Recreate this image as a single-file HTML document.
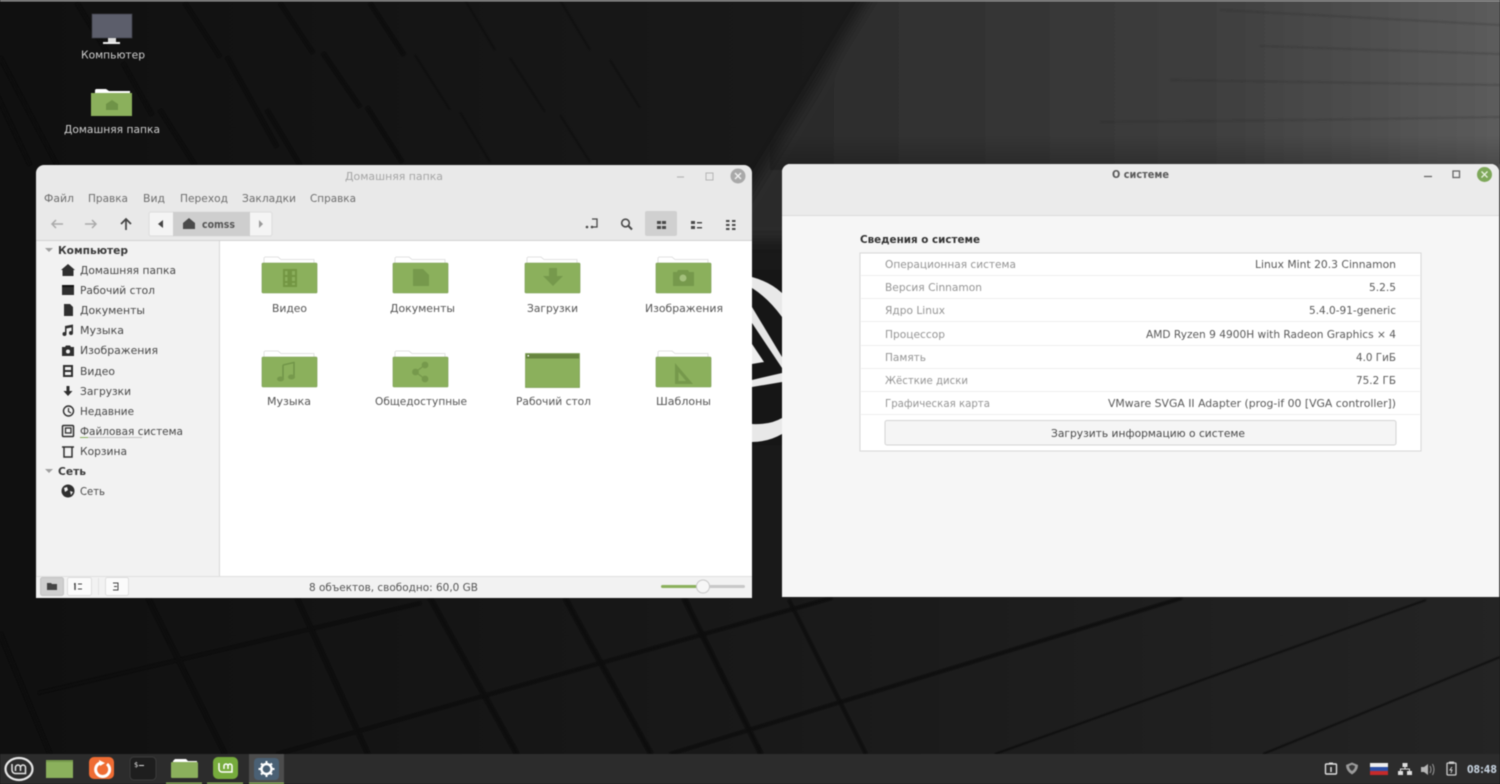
<!DOCTYPE html>
<html><head><meta charset="utf-8"><title>Linux Mint</title>
<style>
html,body{margin:0;padding:0;background:#111;width:1500px;height:784px;overflow:hidden}
svg{display:block;filter:blur(.45px)}
text{font-family:"DejaVu Sans","Liberation Sans",sans-serif;font-size:10.5px;fill:#555}
.b{font-weight:bold}
.m text{fill:#6d6d6d}
.s text{fill:#484848}
.f text{fill:#555}
.l text{fill:#959595}
.v text{fill:#5a5a5a}
.d text{fill:#cfcfcf}
.dl{stroke:#080808;fill:none}
</style></head><body>
<svg width="1500" height="784" viewBox="0 0 1500 784" xmlns="http://www.w3.org/2000/svg">
<defs>
<linearGradient id="bg" x1="0" x2="1" y1="0" y2="0"><stop offset="0" stop-color="#101010"/><stop offset=".5" stop-color="#191919"/><stop offset="1" stop-color="#242424"/></linearGradient>
<linearGradient id="tr" gradientUnits="userSpaceOnUse" x1="780" x2="1500" y1="0" y2="0"><stop offset="0" stop-color="#2a2a2a"/><stop offset=".6" stop-color="#3e3e3e"/><stop offset="1" stop-color="#5c5c5c"/></linearGradient>
<linearGradient id="v" gradientUnits="userSpaceOnUse" x1="0" x2="0" y1="135" y2="168"><stop offset="0" stop-color="#000" stop-opacity="0"/><stop offset="1" stop-color="#000" stop-opacity=".22"/></linearGradient>
<filter id="soft" x="-5%" y="-20%" width="110%" height="140%"><feGaussianBlur stdDeviation="7"/></filter>
<filter id="ln" x="-5%" y="-5%" width="110%" height="110%"><feGaussianBlur stdDeviation=".8"/></filter>
<g id="fold"><path d="M3 0h13l3 2.500h33v4H2V1z" fill="#fff" stroke="#d9d9d9" stroke-width=".8"/><rect x="0" y="6" width="55" height="30" rx="1" fill="#8bb05c" stroke="#76994c" stroke-width=".6"/></g>
</defs>
<!-- wallpaper -->
<rect width="1500" height="784" fill="url(#bg)"/>
<g filter="url(#soft)"><path d="M893 -40H1560V240H720z" fill="url(#tr)"/></g>
<path d="M770 135H1500V170H770z" fill="url(#v)"/>
<g filter="url(#ln)">
<g class="dl" stroke-width="4">
<path d="M77 3L110 57M185 3L220 57M280 3L313 53M227 57L277 147M323 53L360 107M370 3L404 55M367 107L402 162M267 110L300 165M123 63L152 115M0 57L57 165M-10 80L30 165M160 110L195 165"/>
</g>
<g class="dl" stroke-width="2" opacity=".3">
<path d="M465 0L495 50M560 0L590 50M415 55L450 110M510 58L545 112M610 60L640 108M460 112L490 162M560 115L590 162"/>
</g>
<g class="dl" stroke-width="4.500">
<path d="M148 598L225 754M297 598L368 754M430 598L517 754M565 598L651 754M684 598L761 754M0 633L50 754"/>
</g>
<g class="dl" stroke-width="3"><path d="M789 600L866 754M38 693L421 603M277 754L832 598M670 754L1182 598"/></g>
<g class="dl" stroke-width="1.500" opacity=".7"><path d="M995 754L1426 600M1263 754L1500 657"/></g>
<g stroke="#2c2c2c" stroke-width="1" fill="none" opacity=".45"><path d="M1220 10L1500 25M1260 46L1500 54M1170 80L1500 85M1100 122L1300 120L1500 117"/></g>
</g>
<rect width="1500" height="1.500" fill="#9a9a9a"/>
<!-- mint logo fragment -->
<rect x="752" y="270" width="30" height="175" fill="#161616"/>
<path d="M752 277Q770 282 782 293V317Q768 298 752 288z" fill="#e8e8e8"/>
<path d="M752 307L782 357V368L752 323z" fill="#e6e6e6"/>
<path d="M752 344L764 362L752 364z" fill="#eee"/>
<path d="M752 380L782 373V382L752 387z" fill="#e8e8e8"/>
<path d="M752 424Q770 425 782 418V434Q768 442 752 442z" fill="#e8e8e8"/>
<!-- desktop icons -->
<rect x="92" y="14" width="40" height="24" fill="#5c5e6b" stroke="#3d3e46" stroke-width=".7"/>
<rect x="108" y="38" width="8" height="4" fill="#ddd"/><rect x="103" y="42" width="17" height="2" fill="#eee"/>
<path d="M95 90l1-1h10l3 2h21v5H95z" fill="#fff"/>
<rect x="91" y="93" width="41" height="23" fill="#8bb05c"/>
<path d="M112 100l6 4v6h-12v-6z" fill="#6f9347"/>
<g class="d">
<text x="81" y="58.500" textLength="64" lengthAdjust="spacingAndGlyphs">Компьютер</text>
<text x="64" y="133" textLength="96" lengthAdjust="spacingAndGlyphs">Домашняя папка</text>
</g>
<!-- file manager window -->
<path d="M36 173a8 8 0 0 1 8-8H744a8 8 0 0 1 8 8V598H36z" fill="#e9e9e9"/>
<rect x="36" y="240" width="716" height="1" fill="#d2d2d2"/>
<rect x="37" y="241" width="182" height="335" fill="#f2f2f2"/>
<rect x="219" y="241" width="533" height="335" fill="#fff"/>
<rect x="219" y="241" width="1" height="335" fill="#d8d8d8"/>
<rect x="36" y="576" width="716" height="22" fill="#f2f2f2"/>
<rect x="36" y="576" width="716" height="1" fill="#e0e0e0"/>
<text x="345" y="180" textLength="98" lengthAdjust="spacingAndGlyphs" style="fill:#a5a5a5">Домашняя папка</text>
<path d="M677 177h7" stroke="#b5b5b5" stroke-width="1.200"/>
<rect x="706" y="173" width="7" height="7" fill="none" stroke="#b5b5b5"/>
<circle cx="738" cy="176" r="7.500" fill="#a9a9a9"/><path d="M735 173l6 6M741 173l-6 6" stroke="#eee" stroke-width="1.500"/>
<g class="m">
<text x="44" y="202" textLength="30" lengthAdjust="spacingAndGlyphs">Файл</text>
<text x="88" y="202" textLength="40" lengthAdjust="spacingAndGlyphs">Правка</text>
<text x="143" y="202" textLength="22" lengthAdjust="spacingAndGlyphs">Вид</text>
<text x="180" y="202" textLength="48" lengthAdjust="spacingAndGlyphs">Переход</text>
<text x="242" y="202" textLength="54" lengthAdjust="spacingAndGlyphs">Закладки</text>
<text x="310" y="202" textLength="46" lengthAdjust="spacingAndGlyphs">Справка</text>
</g>
<!-- toolbar -->
<g fill="none" stroke-width="1.500">
<path d="M63 224H52M56 220l-4 4 4 4" stroke="#aaa"/>
<path d="M85 224H96M92 220l4 4-4 4" stroke="#aaa"/>
<path d="M126 230V219M121 224l5-5 5 5" stroke="#444" stroke-width="1.700"/>
</g>
<rect x="149" y="212" width="123" height="24" rx="2" fill="#f4f4f4" stroke="#dcdcdc"/>
<rect x="173" y="212" width="77" height="24" fill="#cecece"/>
<path d="M158 224l5-4v8z" fill="#444"/><path d="M259 220l4 4-4 4z" fill="#999"/>
<path d="M189 218l6 5v6h-12v-6z" fill="#4a4a4a"/>
<text class="b" x="202" y="228" textLength="33" lengthAdjust="spacingAndGlyphs" style="fill:#555">comss</text>
<rect x="645" y="211" width="32" height="25" rx="2" fill="#d0d0d0"/>
<g fill="#4a4a4a">
<circle cx="587" cy="227" r="1.300"/><circle cx="592" cy="227" r="1.300"/>
<rect x="657" y="221" width="4" height="3"/><rect x="662" y="221" width="4" height="3"/><rect x="657" y="226" width="4" height="3"/><rect x="662" y="226" width="4" height="3"/>
<rect x="691" y="221" width="4" height="3"/><rect x="691" y="226" width="4" height="3"/><rect x="697" y="222" width="5" height="1.500"/><rect x="697" y="227" width="5" height="1.500"/>
<rect x="726" y="220" width="3.500" height="2"/><rect x="726" y="224" width="3.500" height="2"/><rect x="726" y="228" width="3.500" height="2"/><rect x="732" y="220" width="3.500" height="2"/><rect x="732" y="224" width="3.500" height="2"/><rect x="732" y="228" width="3.500" height="2"/>
</g>
<path d="M592 219h5v8h-4" fill="none" stroke="#4a4a4a" stroke-width="1.300"/>
<circle cx="625.500" cy="223" r="3.800" fill="none" stroke="#4a4a4a" stroke-width="1.600"/><path d="M628.500 226l3.500 3.500" stroke="#4a4a4a" stroke-width="2"/>
<!-- sidebar -->
<path d="M45 248h8l-4 4z" fill="#a0a0a0"/><path d="M45 469h8l-4 4z" fill="#a0a0a0"/>
<g class="s">
<text class="b" x="58" y="254" textLength="70" lengthAdjust="spacingAndGlyphs" style="fill:#3a3a3a">Компьютер</text>
<text x="80" y="274" textLength="96" lengthAdjust="spacingAndGlyphs">Домашняя папка</text>
<text x="80" y="294" textLength="75" lengthAdjust="spacingAndGlyphs">Рабочий стол</text>
<text x="80" y="314" textLength="65" lengthAdjust="spacingAndGlyphs">Документы</text>
<text x="80" y="334" textLength="44" lengthAdjust="spacingAndGlyphs">Музыка</text>
<text x="80" y="354" textLength="78" lengthAdjust="spacingAndGlyphs">Изображения</text>
<text x="80" y="375" textLength="35" lengthAdjust="spacingAndGlyphs">Видео</text>
<text x="80" y="395" textLength="51" lengthAdjust="spacingAndGlyphs">Загрузки</text>
<text x="80" y="415" textLength="54" lengthAdjust="spacingAndGlyphs">Недавние</text>
<text x="80" y="435" textLength="103" lengthAdjust="spacingAndGlyphs">Файловая система</text>
<text x="80" y="455" textLength="47" lengthAdjust="spacingAndGlyphs">Корзина</text>
<text class="b" x="58" y="475" textLength="28" lengthAdjust="spacingAndGlyphs" style="fill:#3a3a3a">Сеть</text>
<text x="80" y="495" textLength="25" lengthAdjust="spacingAndGlyphs">Сеть</text>
</g>
<rect x="80" y="437" width="8" height="1" fill="#8ab060"/><rect x="88" y="437" width="54" height="1" fill="#c4c4c4"/>
<g fill="#2f2f2f">
<path d="M68 264l7 6h-1.500v6h-11v-6H61z"/>
<rect x="62" y="285" width="12" height="10"/><rect x="62" y="285" width="12" height="2" fill="#111"/>
<path d="M64 304h6l3 3v9h-9z"/>
<path d="M65 326l8-1.500v9h-1.500v-6l-5 1v6h-1.500z"/><circle cx="64.500" cy="334" r="2"/><circle cx="71" cy="333" r="2"/>
<path d="M62 347h3l1-1.500h4l1 1.500h3v9h-12z"/>
<path d="M63 365h10v12H63z"/>
<path d="M66.500 386h3v5h3l-4.500 5-4.500-5h3z"/>
</g>
<circle cx="68" cy="351.500" r="2" fill="#f2f2f2"/>
<path d="M65 367h6v3h-6zM65 372h6v3h-6z" fill="#f2f2f2"/>
<circle cx="68.500" cy="411" r="5" fill="none" stroke="#2f2f2f" stroke-width="1.400"/><path d="M68.500 408v3.500l2.500 1.500" fill="none" stroke="#2f2f2f" stroke-width="1.200"/>
<rect x="62.500" y="425.500" width="11" height="11" rx="1" fill="none" stroke="#2f2f2f" stroke-width="1.500"/><rect x="65.500" y="428" width="5.500" height="5" fill="none" stroke="#2f2f2f" stroke-width="1.300"/>
<path d="M62 447h12M64 447v10h8v-10" fill="none" stroke="#2f2f2f" stroke-width="1.500"/>
<circle cx="68" cy="491" r="6.500" fill="#2f2f2f"/><path d="M64 488l3-1 1 3-3 2zM70 491l3 1-2 3z" fill="#f2f2f2"/>
<!-- folders -->
<use href="#fold" x="262" y="257"/><use href="#fold" x="393" y="257"/><use href="#fold" x="525" y="257"/><use href="#fold" x="656" y="257"/>
<use href="#fold" x="262" y="351"/><use href="#fold" x="393" y="351"/><use href="#fold" x="656" y="351"/>
<rect x="525.500" y="353.500" width="54" height="34" fill="#8bb05c" stroke="#76994c" stroke-width=".7"/><rect x="526" y="354" width="53" height="4.500" fill="#67853f"/><rect x="527.500" y="355" width="1.500" height="1.500" fill="#fff"/>
<g fill="#76994c">
<rect x="283" y="269" width="14" height="18" fill="#739643"/>
<path d="M285 271h2.500v4H285zM285 277h2.500v4H285zM285 283h2.500v2H285zM292 271h3v4h-3zM292 277h3v4h-3zM292 283h3v2h-3z" fill="#8bb05c"/>
<path d="M413 269h10l6 6v11h-16z"/>
<path d="M549 268h8v8h6l-10 10-10-10h6z"/>
<path d="M673 272h4l1-2h10l1 2h5v14h-21z"/>
<circle cx="683" cy="278" r="3.500" fill="#a3c07c"/>
<path d="M283 365l11-2.500v15" fill="none" stroke="#6f9347" stroke-width="1.400"/><path d="M283 365v14" fill="none" stroke="#6f9347" stroke-width="1.400"/>
<ellipse cx="280.500" cy="379" rx="3.500" ry="2.500"/><ellipse cx="291.500" cy="377" rx="3.500" ry="2.500"/>
<circle cx="425" cy="365" r="3.400"/><circle cx="415.500" cy="372" r="3.400"/><circle cx="425" cy="379" r="3.400"/>
<path d="M425 365l-9.500 7 9.500 7" fill="none" stroke="#76994c" stroke-width="1.300"/>
<path d="M675 363l18 21h-18zM678.500 372v9h7.500z" fill-rule="evenodd"/>
</g>
<g class="f">
<text x="272" y="312" textLength="35" lengthAdjust="spacingAndGlyphs">Видео</text>
<text x="390" y="312" textLength="65" lengthAdjust="spacingAndGlyphs">Документы</text>
<text x="527" y="312" textLength="51" lengthAdjust="spacingAndGlyphs">Загрузки</text>
<text x="645" y="312" textLength="78" lengthAdjust="spacingAndGlyphs">Изображения</text>
<text x="267" y="405" textLength="44" lengthAdjust="spacingAndGlyphs">Музыка</text>
<text x="375" y="405" textLength="92" lengthAdjust="spacingAndGlyphs">Общедоступные</text>
<text x="516" y="405" textLength="75" lengthAdjust="spacingAndGlyphs">Рабочий стол</text>
<text x="656" y="405" textLength="55" lengthAdjust="spacingAndGlyphs">Шаблоны</text>
</g>
<!-- status bar -->
<rect x="40.500" y="577.500" width="23" height="18" rx="2" fill="#cfcfcf" stroke="#c4c4c4"/>
<rect x="67.500" y="577.500" width="24" height="18" rx="2" fill="#fbfbfb" stroke="#dedede"/>
<rect x="105.500" y="577.500" width="23" height="18" rx="2" fill="#fbfbfb" stroke="#dedede"/>
<rect x="98" y="578" width="1" height="17" fill="#e2e2e2"/>
<path d="M47 583h4l1 1h5v6H47z" fill="#444"/>
<path d="M75 583v7M74 584h1.500" stroke="#444" stroke-width="1.400"/><path d="M78 584h4M78 589h4" stroke="#444" stroke-width="1"/>
<path d="M113 583h5v7h-5M114 586.500h3" stroke="#444" stroke-width="1" fill="none"/>
<text x="309" y="591" textLength="169" lengthAdjust="spacingAndGlyphs" style="fill:#555">8 объектов, свободно: 60,0 GB</text>
<rect x="661" y="585" width="42" height="3" rx="1.500" fill="#8bb05c"/><rect x="703" y="585" width="42" height="3" rx="1.500" fill="#c8c8c8"/>
<circle cx="703" cy="586.500" r="6.500" fill="#f6f6f6" stroke="#c8c8c8"/>
<!-- about window -->
<path d="M782 172a8 8 0 0 1 8-8H1491a8 8 0 0 1 8 8V597H782z" fill="#f6f6f6"/>
<path d="M782 172a8 8 0 0 1 8-8H1491a8 8 0 0 1 8 8V215H782z" fill="#ebebeb"/>
<rect x="782" y="215" width="717" height="1" fill="#dcdcdc"/>
<rect x="1499" y="164" width="1" height="433" fill="#666"/>
<text class="b" x="1112" y="178" textLength="57" lengthAdjust="spacingAndGlyphs" style="fill:#5a5a5a">О системе</text>
<path d="M1424 176.500h8" stroke="#666" stroke-width="1.300"/>
<rect x="1453" y="171" width="6.500" height="6.500" fill="none" stroke="#666" stroke-width="1.300"/>
<circle cx="1484.500" cy="174.500" r="7.500" fill="#7ea85a"/><path d="M1481.500 171.500l6 6M1487.500 171.500l-6 6" stroke="#e6efdc" stroke-width="1.400"/>
<text class="b" x="860" y="243" textLength="120" lengthAdjust="spacingAndGlyphs" style="fill:#333">Сведения о системе</text>
<rect x="860" y="253" width="561" height="198" fill="#fff" stroke="#d8d8d8"/>
<g fill="#eeeeee"><rect x="861" y="275" width="559" height="1"/><rect x="861" y="298" width="559" height="1"/><rect x="861" y="321" width="559" height="1"/><rect x="861" y="345" width="559" height="1"/><rect x="861" y="368" width="559" height="1"/><rect x="861" y="391" width="559" height="1"/><rect x="861" y="414" width="559" height="1"/></g>
<g class="l">
<text x="885" y="268" textLength="131" lengthAdjust="spacingAndGlyphs">Операционная система</text>
<text x="885" y="291" textLength="97" lengthAdjust="spacingAndGlyphs">Версия Cinnamon</text>
<text x="885" y="314" textLength="60" lengthAdjust="spacingAndGlyphs">Ядро Linux</text>
<text x="885" y="338" textLength="60" lengthAdjust="spacingAndGlyphs">Процессор</text>
<text x="885" y="361" textLength="41" lengthAdjust="spacingAndGlyphs">Память</text>
<text x="885" y="384" textLength="83" lengthAdjust="spacingAndGlyphs">Жёсткие диски</text>
<text x="885" y="407" textLength="105" lengthAdjust="spacingAndGlyphs">Графическая карта</text>
</g>
<g class="v">
<text x="1255" y="268" textLength="141" lengthAdjust="spacingAndGlyphs">Linux Mint 20.3 Cinnamon</text>
<text x="1369" y="291" textLength="27" lengthAdjust="spacingAndGlyphs">5.2.5</text>
<text x="1309" y="314" textLength="87" lengthAdjust="spacingAndGlyphs">5.4.0-91-generic</text>
<text x="1146" y="338" textLength="250" lengthAdjust="spacingAndGlyphs">AMD Ryzen 9 4900H with Radeon Graphics × 4</text>
<text x="1356" y="361" textLength="40" lengthAdjust="spacingAndGlyphs">4.0 ГиБ</text>
<text x="1356" y="384" textLength="40" lengthAdjust="spacingAndGlyphs">75.2 ГБ</text>
<text x="1108" y="407" textLength="288" lengthAdjust="spacingAndGlyphs">VMware SVGA II Adapter (prog-if 00 [VGA controller])</text>
</g>
<rect x="885" y="420.500" width="511" height="24.500" rx="2" fill="#f5f5f5" stroke="#d4d4d4"/>
<text x="1051" y="437" textLength="194" lengthAdjust="spacingAndGlyphs" style="fill:#4a4a4a">Загрузить информацию о системе</text>
<!-- panel -->
<rect x="0" y="754" width="1500" height="30" fill="#2c2c2c"/>
<rect x="249" y="754" width="35" height="30" fill="#4c4c4c"/>
<ellipse cx="19" cy="769" rx="13.500" ry="11" fill="none" stroke="#e6e6e6" stroke-width="2.200"/>
<path d="M12 764v6a3.500 3.500 0 0 0 4 3.500h9.500v-6a2.500 2.500 0 0 0-5 0v3.500M20.500 767.500a2.500 2.500 0 0 0-5 0v3.500" fill="none" stroke="#e6e6e6" stroke-width="1.500"/>
<rect x="46" y="760" width="27" height="18" fill="#8bb05c"/><rect x="46" y="760" width="27" height="2" fill="#76994c"/>
<rect x="89" y="757" width="25" height="22" rx="5" fill="#ef6c33"/>
<path d="M107 764a7 7 0 1 1-7-1" fill="none" stroke="#fff" stroke-width="3"/><path d="M99 760l6 3-5 3z" fill="#fff"/>
<rect x="130" y="757" width="26" height="23" rx="4" fill="#1e1e1e" stroke="#3c3c3c"/>
<text x="134" y="767" style="font-size:7px;fill:#ddd">$</text><rect x="139" y="765" width="5" height="1" fill="#ddd"/>
<path d="M173 761l2-2h11l2 2h9v4h-24z" fill="#fff"/>
<rect x="171" y="762" width="27" height="16" rx="1" fill="#8bb05c"/>
<rect x="213" y="757" width="25" height="22" rx="5" fill="#76ab3c"/>
<path d="M219 763v6a3 3 0 0 0 3 3h10v-6a2 2 0 0 0-4 0v3M228 766a2 2 0 0 0-4 0v3" fill="none" stroke="#fff" stroke-width="1.500"/>
<rect x="254" y="758" width="25" height="22" rx="4" fill="#4a6074"/>
<circle cx="266.500" cy="769" r="5" fill="none" stroke="#fff" stroke-width="2.400"/>
<path d="M266.500 761v3M266.500 774v3M258.500 769h3M271.500 769h3M261 763.500l2 2M270 772.500l2 2M272 763.500l-2 2M263 772.500l-2 2" stroke="#fff" stroke-width="2"/>
<g fill="#8bb05c"><rect x="166" y="782.500" width="36" height="1.500"/><rect x="207" y="782.500" width="36" height="1.500"/><rect x="249" y="782.500" width="35" height="1.500"/></g>
<!-- tray -->
<rect x="1325.500" y="764" width="11" height="10" rx="1" fill="none" stroke="#ddd" stroke-width="1.400"/>
<path d="M1331 767v5" stroke="#ddd" stroke-width="1.500"/><rect x="1329" y="762.500" width="4" height="2" fill="#ddd"/>
<path d="M1346 765l6-2.500 6 2.500q0 6-6 9.500q-6-3.500-6-9.500z" fill="#9a9a9a"/><path d="M1349 766l3-1.200 3 1.200q0 3-3 5q-3-2-3-5z" fill="#3a3a3a"/>
<rect x="1370" y="763" width="18" height="4" fill="#eee"/><rect x="1370" y="767" width="18" height="4" fill="#2c4fa6"/><rect x="1370" y="771" width="18" height="4" fill="#c52a2a"/>
<g fill="#ddd"><rect x="1402.500" y="763" width="5" height="4"/><rect x="1398" y="771" width="5" height="4"/><rect x="1407" y="771" width="5" height="4"/></g>
<path d="M1405 767v2M1400.500 771v-2h9v2" fill="none" stroke="#ddd"/>
<path d="M1421 767h3l4-3v11l-4-3h-3z" fill="#b5b5b5"/><path d="M1430 766q2 3.500 0 7M1432.500 764q3 5.500 0 11" fill="none" stroke="#9a9a9a"/>
<rect x="1447" y="763" width="9" height="12" rx="1" fill="none" stroke="#ccc" stroke-width="1.300"/><rect x="1449" y="761.500" width="5" height="2.500" fill="#ccc"/><path d="M1452 767l-2 3h2l-1 3" fill="none" stroke="#ccc"/>
<text class="b" x="1467" y="773" textLength="30" lengthAdjust="spacingAndGlyphs" style="fill:#c4d0dc">08:48</text>
</svg>
</body></html>
